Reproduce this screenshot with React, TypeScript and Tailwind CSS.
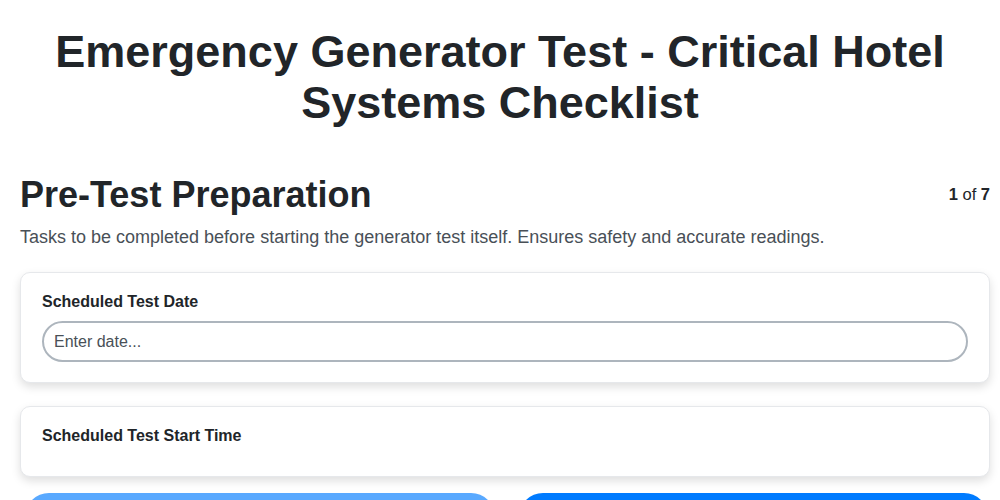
import React from 'react';

const fields = [
  { label: 'Scheduled Test Date', placeholder: 'Enter date...', input: true },
  { label: 'Scheduled Test Start Time', placeholder: '', input: false },
];

const App: React.FC = () => {
  return (
    <div className="min-h-screen bg-white font-['Liberation_Sans',Arial,sans-serif] text-[#212529]">
      <h1 className="px-5 pt-[26px] text-center text-[45px] font-bold leading-[51px]">
        Emergency Generator Test - Critical Hotel Systems Checklist
      </h1>

      <section className="mt-[45px] pl-5 pr-[10px]">
        <div className="flex items-center justify-between">
          <h2 className="text-[36px] font-bold leading-[43px]">Pre-Test Preparation</h2>
          <span className="text-[16.5px]">
            <b>1</b> of <b>7</b>
          </span>
        </div>
        <p className="mt-[8px] text-[18px] leading-[26px] text-[#495057]">
          Tasks to be completed before starting the generator test itself. Ensures safety and accurate readings.
        </p>

        <div className="mt-[22px] flex flex-col gap-[23px]">
          {fields.map((f) => (
            <div
              key={f.label}
              className={`rounded-[10px] border border-[#e6e8eb] bg-white px-[21px] pt-[17px] shadow-[0_4px_10px_rgba(0,0,0,0.13)] ${f.input ? 'pb-5' : 'pb-[21px]'}`}
            >
              <label className="mb-[7px] block text-base font-bold leading-6">{f.label}</label>
              {f.input && (
                <input
                  type="text"
                  placeholder={f.placeholder}
                  className="block h-[41px] w-full rounded-full border-2 border-[#adb5bd] bg-white px-[10px] text-base text-[#212529] outline-none placeholder:text-[#495057]"
                />
              )}
            </div>
          ))}
        </div>

        <div className="mt-[16px] flex gap-6 pl-[5px] pr-[2px]">
          <button className="flex-1 rounded-full bg-[#007bff] py-3 text-base font-bold text-white opacity-65">
            Previous
          </button>
          <button className="flex-1 rounded-full bg-[#007bff] py-3 text-base font-bold text-white">
            Next
          </button>
        </div>
      </section>
    </div>
  );
};

export default App;
